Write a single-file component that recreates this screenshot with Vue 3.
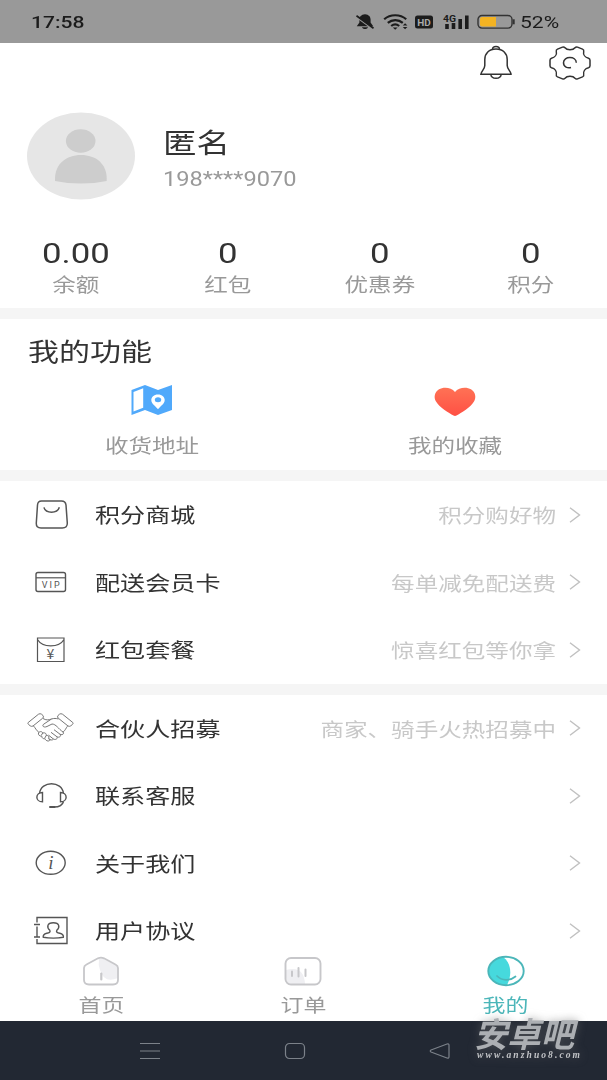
<template>
  <div class="phone">
    <header class="status">
      <span class="time wide-left">17:58</span>
      <div class="status-icons">
        <svg width="20" height="18" viewBox="0 0 20 18">
          <path d="M10 1.200c-4 .4-5.600 2.600-5.600 5.400v3L1.800 13.200h16.400L15.600 9.600v-3C15.600 3.800 14 1.600 10 1.200z" fill="#1c1c1c" />
          <path d="M7 14.200h6c-.4 2.400-5.600 2.400-6 0z" fill="#1c1c1c" />
          <path d="M1.500 4.200l16.500 12" stroke="#999" stroke-width="1.600" />
          <path d="M1.500 2.800l17 12.400" stroke="#1c1c1c" stroke-width="1.700" />
        </svg>
        <svg class="wifi" width="26" height="18" viewBox="0 0 26 18">
          <g fill="none" stroke="#1c1c1c" stroke-width="2.200">
            <path d="M1.200 6.300c6-5.400 16-5.400 22 0" />
            <path d="M4.800 9.800c4.300-3.700 10.700-3.700 15 0" />
            <path d="M8.200 13c2.400-2 5.600-2 8 0" />
          </g>
          <path d="M9.800 14.400h4.800l-2.400 2.300zM19.800 12.500l2.300-2.300 2.300 2.300zM19.800 14l2.300 2.300 2.300-2.300z" fill="#1c1c1c" />
        </svg>
        <svg class="hd" width="18" height="14" viewBox="0 0 18 14">
          <rect width="18" height="13" y=".5" rx="2.500" fill="#1c1c1c" />
          <text x="9" y="10.500" textLength="13.500" lengthAdjust="spacingAndGlyphs" text-anchor="middle" font-size="9.500" font-weight="bold" fill="#aaa">HD</text>
        </svg>
        <svg class="signal" width="27" height="18" viewBox="0 0 27 18">
          <text x="0" y="8.500" textLength="13" lengthAdjust="spacingAndGlyphs" font-size="9.500" font-weight="bold" fill="#1c1c1c">4G</text>
          <path d="M4 11v5M10.500 10v6M17.200 6v10M23.800 2.500v13.500" stroke="#1c1c1c" stroke-width="3.600" />
        </svg>
        <svg class="battery" width="39" height="16" viewBox="0 0 39 16">
          <rect x="1" y="1.500" width="34" height="12.600" rx="4" fill="none" stroke="#333" stroke-width="1.400" />
          <path d="M3 5q0-2 2-2h14v9.600H5q-2 0-2-2z" fill="#f3b323" />
          <path d="M36.700 5.300v5" stroke="#333" stroke-width="2" />
        </svg>
        <span class="percent wide-left">52%</span>
      </div>
    </header>

    <main class="content">
      <section class="profile">
        <div class="tools">
          <svg width="34" height="36" viewBox="0 0 34 36" fill="none" stroke="#333" stroke-width="1.500">
            <path d="M13.500 4.500c0-4 7-4 7 0" />
            <path d="M17 4C10 4 5.800 8.500 5.800 14.500v6c0 3.500-3.300 5.500-4 8.800h30.400c-.7-3.300-4-5.300-4-8.800v-6C28.200 8.500 24 4 17 4z" stroke-linejoin="round" />
            <path d="M11.800 29.500c.6 5 9.800 5 10.400 0" />
          </svg>
          <svg width="42" height="34" viewBox="0 0 42 34" fill="none" stroke="#333" stroke-width="1.500" stroke-linejoin="round">
            <path d="M16 1.800C18 4.500 24 4.500 26 1.800q1-1.200 2.500-.7l5 2q1.600.7 1.200 2.200C34 8.500 36 11.500 39.500 12.300q1.500.4 1.500 2v5.400q0 1.600-1.500 2C36 22.500 34 25.500 34.700 28.700q.4 1.500-1.200 2.200l-5 2q-1.500.5-2.500-.7C24 29.500 18 29.500 16 32.200q-1 1.200-2.500.7l-5-2q-1.600-.7-1.200-2.200C8 25.500 6 22.500 2.500 21.700q-1.500-.4-1.500-2v-5.400q0-1.600 1.500-2C6 11.500 8 8.500 7.300 5.300q-.4-1.500 1.200-2.200l5-2q1.500-.5 2.500.7z" />
            <path d="M27.300 16.800c0-7-12.800-7-12.800 0 0 4.200 4.200 5.600 7.500 4.700" />
          </svg>
        </div>
        <div class="user">
          <svg class="avatar" width="108" height="88" viewBox="0 0 108 88">
            <ellipse cx="54" cy="44" rx="54" ry="43.500" fill="#e6e6e6" />
            <ellipse cx="53.700" cy="29" rx="14.800" ry="11.800" fill="#cdcdcd" />
            <path d="M28 67C28 52 39 43 54 43s25.700 9 25.700 23.500v2.500q-12 2.500-25.700 2.500T28 69z" fill="#cdcdcd" />
          </svg>
          <div class="who">
            <div class="name wide-left">匿名</div>
            <div class="mobile wide-left">198****9070</div>
          </div>
        </div>
        <div class="stats">
          <div v-for="item in stats" :key="item.label" class="stat">
            <div class="value wide">{{ item.value }}</div>
            <div class="caption wide">{{ item.label }}</div>
          </div>
        </div>
      </section>

      <section class="features">
        <h2 class="wide-left">我的功能</h2>
        <div class="feature-row">
          <div class="feature">
            <svg width="42" height="32" viewBox="0 0 42 32">
              <path fill="#50a9fb" fill-rule="evenodd" d="M.5 6L14 1l13 5L41 1v25l-14 5-13-5-13.500 5zM2.500 8v19.500l9.700-3.800V4.300zM27 10.500c-4.200 0-6.700 2.600-6.700 5.600 0 4 4.700 6.400 6.700 9.200 2-2.800 6.700-5.200 6.700-9.200 0-3-2.500-5.600-6.700-5.600z" />
              <ellipse cx="27" cy="15.800" rx="3.200" ry="2.500" fill="#50a9fb" />
            </svg>
            <div class="caption wide">收货地址</div>
          </div>
          <div class="feature">
            <svg width="42" height="32" viewBox="0 0 42 32">
              <defs>
                <linearGradient id="heart" x1="0" y1="0" x2="0" y2="1">
                  <stop offset="0" stop-color="#ff7255" />
                  <stop offset="1" stop-color="#ff5044" />
                </linearGradient>
              </defs>
              <path fill="url(#heart)" d="M21 8C17 2.700 9 2.900 5 5.200.5 8-.5 13.500 2 17.500c3 5.500 13 11.500 17.500 14q1.500.8 3 0C27 29 37 23 40 17.500c2.500-4 1.500-9.500-3-12.300-4-2.300-12-2.500-16 2.800z" />
            </svg>
            <div class="caption wide">我的收藏</div>
          </div>
        </div>
      </section>

      <section v-for="(group, index) in groups" :key="index" class="menu">
        <div v-for="row in group" :key="row.label" class="row">
          <svg class="row-icon" width="48" height="40" viewBox="0 0 48 40" fill="none" stroke="#555" stroke-width="1.200">
            <g v-if="row.icon === 'bag'" stroke-width="1.500">
              <path d="M14.500 6h20q4 0 4.500 4l1.300 18q.2 5-5 5H14q-5 0-4.700-5l1.200-18q.3-4 4-4z" />
              <path d="M17 12.300c1.500 6.500 13.500 6.500 15.300 0" />
            </g>
            <g v-else-if="row.icon === 'vip'">
              <rect x="9" y="10.500" width="29.500" height="19" rx="2" stroke-width="1.400" />
              <path d="M9 15.800h29.500" />
              <text class="glyph" x="23.700" y="25.500" textLength="18" text-anchor="middle" font-size="9">VIP</text>
            </g>
            <g v-else-if="row.icon === 'packet'">
              <path d="M10.500 8h26.500v23.500H10.500zM10.500 9.500c5 8.500 21.500 8.500 26.500 0" />
              <text class="glyph yen" x="23.500" y="28.500" text-anchor="middle" font-size="14">¥</text>
            </g>
            <g v-else-if="row.icon === 'hands'" stroke="#777" stroke-width="1" stroke-linejoin="round">
              <path d="M1.200 14.500L11.500 6.200q1.700-1 3 0l1.500 1.300q1.200 1.500-.3 2.700L6 18q-1.500.8-2.800-.2l-1.800-1.500q-.9-.9-.2-1.800z" />
              <path d="M45.800 14.500L35.500 6.200q-1.700-1-3 0L31 7.500q-1.200 1.500.3 2.700L41 18q1.500.8 2.800-.2l1.800-1.500q.9-.9.200-1.800z" />
              <path d="M16 10.500c3 1.800 5.500 1.700 8.500.5 2.500-.8 4.500-.7 7 0M6.500 18c2 2 2.500 4.200 5.500 6.500M40.500 18.200c-1.800 2.200-2 4-4.500 6" />
              <path d="M24.500 11l-8 5.300c-2 2 .8 3.500 3.500 2.200l5-2.500c4 0 6.500 5 11 8 1.500 2-.8 3.500-3 2.200l-6-4.500M33 26.200c1.500 2-.7 3.800-3 2.600l-6-4.500M30 28.800c1 2-1.500 3.300-3.500 2.300l-5-4M26.500 31c-1 1.500-3.500 1.200-5-.2" />
              <path d="M11.500 25c1-2 3.800-1.700 4.200 0 2.500-.7 4 .7 3.500 2.500 2.500-.4 3.300 1.300 2.300 2.800 2 .3 2 2.700-.3 2.700-1.700 0-2.700-1-3-2.200-2.200.2-3.500-1-3.300-2.500-2.200 0-4-1.500-3.400-3.300zM15.700 25l-1.500 2.500M19.200 27.500l-1.400 2.500" />
            </g>
            <g v-else-if="row.icon === 'service'" stroke-width="1.400">
              <path d="M12.500 17.500C14 4.500 35 4.500 36.500 17.500M36.500 25.500c-1 4-4.500 5.500-9.500 5.500" />
              <path d="M15.500 16.500v9.300c-7.500 0-7.500-9.300 0-9.300zM33.500 16.500v9.300c7.500 0 7.500-9.300 0-9.300z" />
              <path d="M23 31h4.500" stroke-width="2" stroke-linecap="round" />
            </g>
            <g v-else-if="row.icon === 'about'">
              <ellipse cx="23.700" cy="19.800" rx="14.500" ry="11.500" stroke-width="1.400" />
              <text class="glyph serif" x="24" y="25.500" text-anchor="middle" font-size="19">i</text>
            </g>
            <g v-else stroke-width="1.400">
              <path d="M10 11.500V6.500h30v26H10v-4.500M10 15.500v10.500M7 13.500h6M7 26h6" />
              <path d="M22.800 19.300c-3.300-3.200-2.800-7.500 3.500-7.500s6.800 4.300 3.500 7.500c-1 2 .8 2.500 3 3 3 .7 4 2.500 3.500 4-5 1-15 1-20 0-.5-1.500.5-3.300 3.500-4 2.200-.5 4-1 3-3z" />
            </g>
          </svg>
          <span class="label wide-left">{{ row.label }}</span>
          <span class="hint wide-right">{{ row.hint }}</span>
          <svg class="arrow" width="12" height="18" viewBox="0 0 12 18">
            <path d="M1 1.700L10.500 9 1 16.300" fill="none" stroke="#c0c0c0" stroke-width="1.400" />
          </svg>
        </div>
      </section>
    </main>

    <nav class="tabs">
      <div class="tab">
        <svg width="38" height="30" viewBox="0 0 38 30">
          <path d="M17 3l3-1 16 8v12q-14 6-18-8-2-5-1-11z" fill="#efeff2" />
          <path d="M4.500 8.500L16 2.300q3-1.300 6 0l11.500 6.200q2.500 1.200 2.500 3.500v12q0 4.500-5 4.500H7q-5 0-5-4.500V12q0-2.300 2.500-3.500z" fill="none" stroke="#c7c7ca" stroke-width="1.800" />
          <path d="M19.300 17.500v6" stroke="#c7c7ca" stroke-width="2.200" stroke-linecap="round" />
        </svg>
        <span class="wide">首页</span>
      </div>
      <div class="tab">
        <svg width="38" height="30" viewBox="0 0 38 30">
          <path d="M2 14q18-5 19 14H8q-6-1-6-6z" fill="#efeff2" />
          <rect x="1.500" y="2" width="35" height="26.500" rx="5.500" fill="none" stroke="#c7c7ca" stroke-width="1.900" />
          <path d="M8 15.500v4.500M14.500 12v8.500M21.500 13.500v6.500" stroke="#c7c7ca" stroke-width="2" stroke-linecap="round" />
        </svg>
        <span class="wide">订单</span>
      </div>
      <div class="tab active">
        <svg width="38" height="32" viewBox="0 0 38 32">
          <path d="M16 2c8 5 9.500 18 4 28C8 30 1 24 1 16S8 3 16 2z" fill="#46d9dd" />
          <ellipse cx="19" cy="16" rx="17.700" ry="14.200" fill="none" stroke="#4bb6b9" stroke-width="1.900" />
          <path d="M10 21c5 5 13 5 18.500.5" fill="none" stroke="#4bb6b9" stroke-width="1.700" stroke-linecap="round" />
        </svg>
        <span class="wide">我的</span>
      </div>
    </nav>

    <footer class="system">
      <svg width="22" height="18" viewBox="0 0 22 18"><path d="M1 1.500h20M1 9h20M1 16.500h20" stroke="#7c828a" stroke-width="1.200" /></svg>
      <svg width="22" height="18" viewBox="0 0 22 18"><rect x="1.500" y="1.500" width="19" height="15" rx="4" fill="none" stroke="#7c828a" stroke-width="1.200" /></svg>
      <svg width="22" height="18" viewBox="0 0 22 18"><path d="M2 8l16-6q2-.5 2 1.300v11.400q0 1.800-2 1.300L2 10q-1.500-1 0-2z" fill="none" stroke="#7c828a" stroke-width="1.200" /></svg>
    </footer>

    <div class="watermark">
      <svg width="114" height="50" viewBox="0 0 114 50">
        <text class="brand" x="5" y="36" textLength="100" lengthAdjust="spacingAndGlyphs">安卓吧</text>
        <text class="site" x="8" y="47" textLength="103">www.anzhuo8.com</text>
      </svg>
    </div>
  </div>
</template>

<script setup>
const stats = [
  { value: "0.00", label: "余额" },
  { value: "0", label: "红包" },
  { value: "0", label: "优惠券" },
  { value: "0", label: "积分" },
];

const groups = [
  [
    { icon: "bag", label: "积分商城", hint: "积分购好物" },
    { icon: "vip", label: "配送会员卡", hint: "每单减免配送费" },
    { icon: "packet", label: "红包套餐", hint: "惊喜红包等你拿" },
  ],
  [
    { icon: "hands", label: "合伙人招募", hint: "商家、骑手火热招募中" },
    { icon: "service", label: "联系客服", hint: "" },
    { icon: "about", label: "关于我们", hint: "" },
    { icon: "agreement", label: "用户协议", hint: "" },
  ],
];
</script>

<style>
body {
  margin: 0;
}
</style>

<style scoped>
.phone {
  position: relative;
  width: 607px;
  height: 1080px;
  overflow: hidden;
  display: flex;
  flex-direction: column;
  background: #fff;
  color: #333;
  font-family: Roboto, "Noto Sans CJK SC", sans-serif;
}

svg {
  display: block;
  flex: none;
  overflow: visible;
}

/* the type is drawn wider than it is tall */
.wide,
.wide-left,
.wide-right {
  transform: scaleX(1.24);
  white-space: nowrap;
}

.wide-left {
  transform-origin: left center;
}

.wide-right {
  transform-origin: right center;
}

.status {
  height: 43px;
  flex: none;
  display: flex;
  align-items: center;
  justify-content: space-between;
  padding: 0 48px 0 31px;
  background: #999;
  color: #1c1c1c;
  font-size: 17px;
}

.time {
  font-weight: 500;
}

.status-icons {
  display: flex;
  align-items: center;
}

.wifi {
  margin-left: 8px;
}

.hd {
  margin-left: 6px;
}

.signal {
  margin-left: 10px;
}

.battery {
  margin: 0 4px 0 7px;
}

.percent {
  width: 39px;
}

.content {
  height: 909px;
  flex: none;
  overflow: hidden;
}

.profile {
  height: 265px;
}

.tools {
  display: flex;
  justify-content: flex-end;
  align-items: center;
  gap: 36px;
  height: 40px;
  padding-right: 16px;
}

.user {
  display: flex;
  align-items: center;
  height: 90px;
  padding: 28px 27px 0;
}

.who {
  margin-left: 28px;
  padding-top: 8px;
}

.name {
  font-size: 27px;
  line-height: 38px;
}

.mobile {
  margin-top: 2px;
  font-size: 19.500px;
  line-height: 30px;
  color: #999;
  transform: scaleX(1.21);
}

.stats {
  display: flex;
  padding-top: 35px;
}

.stat {
  flex: 1;
  text-align: center;
}

.value {
  font-size: 28px;
  line-height: 36px;
}

.caption {
  font-size: 19px;
  line-height: 28px;
  color: #999;
}

.features {
  height: 151px;
  border-top: 11px solid #f5f5f5;
}

.features h2 {
  margin: 0 0 0 28px;
  padding-top: 16px;
  font-size: 25px;
  font-weight: normal;
  line-height: 36px;
}

.feature-row {
  display: flex;
  padding-top: 13px;
}

.feature {
  flex: 1;
  display: flex;
  flex-direction: column;
  align-items: center;
  gap: 17px;
}

.menu {
  border-top: 11px solid #f5f5f5;
}

.row {
  display: flex;
  align-items: center;
  height: 67.500px;
  padding: 0 26px 0 27px;
}

.label {
  margin-left: 20px;
  font-size: 20px;
  transform: scaleX(1.255);
}

.hint {
  margin-left: auto;
  font-size: 19px;
  color: #c8c8c8;
}

.arrow {
  margin-left: 13px;
}

.glyph {
  fill: #555;
  stroke: none;
}

.yen {
  font-family: "Noto Sans CJK SC", sans-serif;
}

.serif {
  font-family: "Liberation Serif", serif;
  font-style: italic;
}

.tabs {
  display: flex;
  height: 69px;
  flex: none;
  background: #fff;
}

.tab {
  flex: 1;
  display: flex;
  flex-direction: column;
  align-items: center;
  justify-content: space-between;
  padding-top: 4px;
  font-size: 18.500px;
  line-height: 29px;
  color: #999;
}

.tab.active {
  padding-top: 3px;
  color: #4bb6b9;
}

.system {
  flex: 1;
  display: flex;
  align-items: center;
  justify-content: space-between;
  padding: 0 156px 0 139px;
  background: #222833;
}

.watermark {
  position: absolute;
  left: 469px;
  top: 1011px;
  filter: drop-shadow(0 0 4px rgba(110, 110, 110, 0.6));
}

.brand {
  font-family: "Noto Sans CJK SC", sans-serif;
  font-size: 34px;
  font-weight: 700;
  font-style: italic;
  fill: #acafb3;
}

.site {
  font-family: "Liberation Serif", serif;
  font-size: 9.500px;
  font-weight: bold;
  font-style: italic;
  fill: #c2c4c7;
}
</style>
